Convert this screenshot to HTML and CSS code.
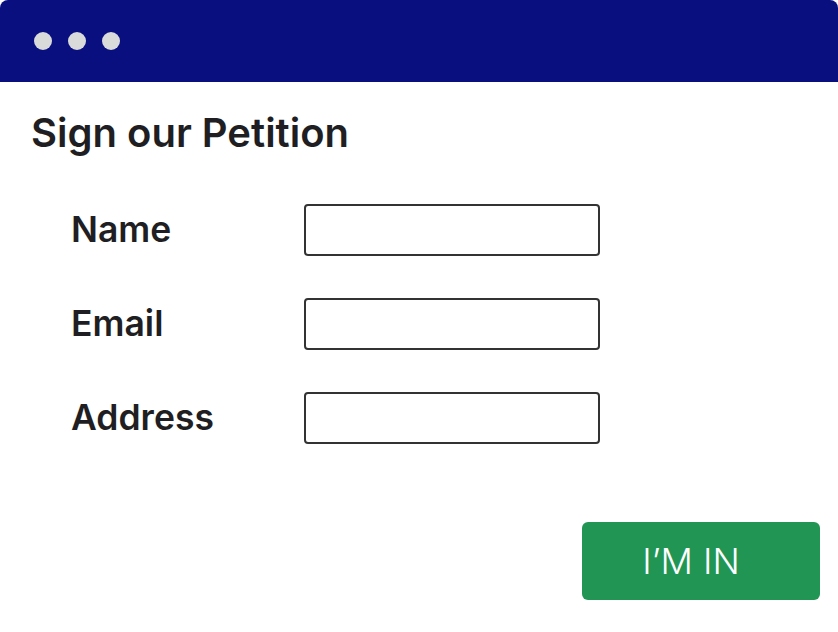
FILE: index.html
```html
<!DOCTYPE html>
<html lang="en">
<head>
<meta charset="utf-8">
<title>Sign our Petition</title>
<link rel="stylesheet" href="styles.css">
</head>
<body>
<div class="window">
  <div class="titlebar">
    <span class="dot"></span>
    <span class="dot"></span>
    <span class="dot"></span>
  </div>
  <div class="content">
    <h1 class="title">Sign our Petition</h1>
    <form class="form">
      <label class="label" for="name">Name</label>
      <input class="field" id="name" type="text">
      <label class="label" for="email">Email</label>
      <input class="field" id="email" type="text">
      <label class="label" for="address">Address</label>
      <input class="field" id="address" type="text">
    </form>
    <div class="actions">
      <button class="btn" type="button">I’M IN</button>
    </div>
  </div>
</div>
</body>
</html>
```

FILE: styles.css
```css
html, body {
  margin: 0;
  padding: 0;
  background: #ffffff;
}
body {
  font-family: Inter, "Noto Sans", sans-serif;
  color: #1f1f23;
}
.window {
  width: 838px;
  height: 632px;
  border-radius: 8px;
  overflow: hidden;
  background: #ffffff;
  display: flex;
  flex-direction: column;
}
.titlebar {
  height: 82px;
  background: #0a0f80;
  display: flex;
  align-items: center;
  gap: 16px;
  padding-left: 34px;
  flex-shrink: 0;
}
.dot {
  width: 18px;
  height: 18px;
  border-radius: 50%;
  background: #d9dbdb;
}
.content {
  flex: 1;
  display: flex;
  flex-direction: column;
  padding: 0 18px 32px 31px;
}
.title {
  margin: 28px 0 0 0;
  font-size: 40px;
  line-height: 46px;
  font-weight: 600;
}
.form {
  margin: 48px 0 0 40px;
  display: grid;
  grid-template-columns: 233px 296px;
  row-gap: 42px;
  align-items: center;
}
.label {
  font-size: 35.5px;
  font-weight: 600;
  line-height: 52px;
}
.field {
  box-sizing: border-box;
  width: 296px;
  height: 52px;
  margin: 0;
  border: 2px solid #333333;
  border-radius: 4px;
  background: #ffffff;
  font: inherit;
}
.actions {
  margin-top: auto;
  display: flex;
  justify-content: flex-end;
}
.btn {
  width: 238px;
  height: 78px;
  border: none;
  border-radius: 6px;
  background: #219654;
  color: #ffffff;
  font-family: Inter, "Noto Sans", sans-serif;
  font-size: 36px;
  font-weight: 300;
  padding: 0 20px 0 0;
}
```
